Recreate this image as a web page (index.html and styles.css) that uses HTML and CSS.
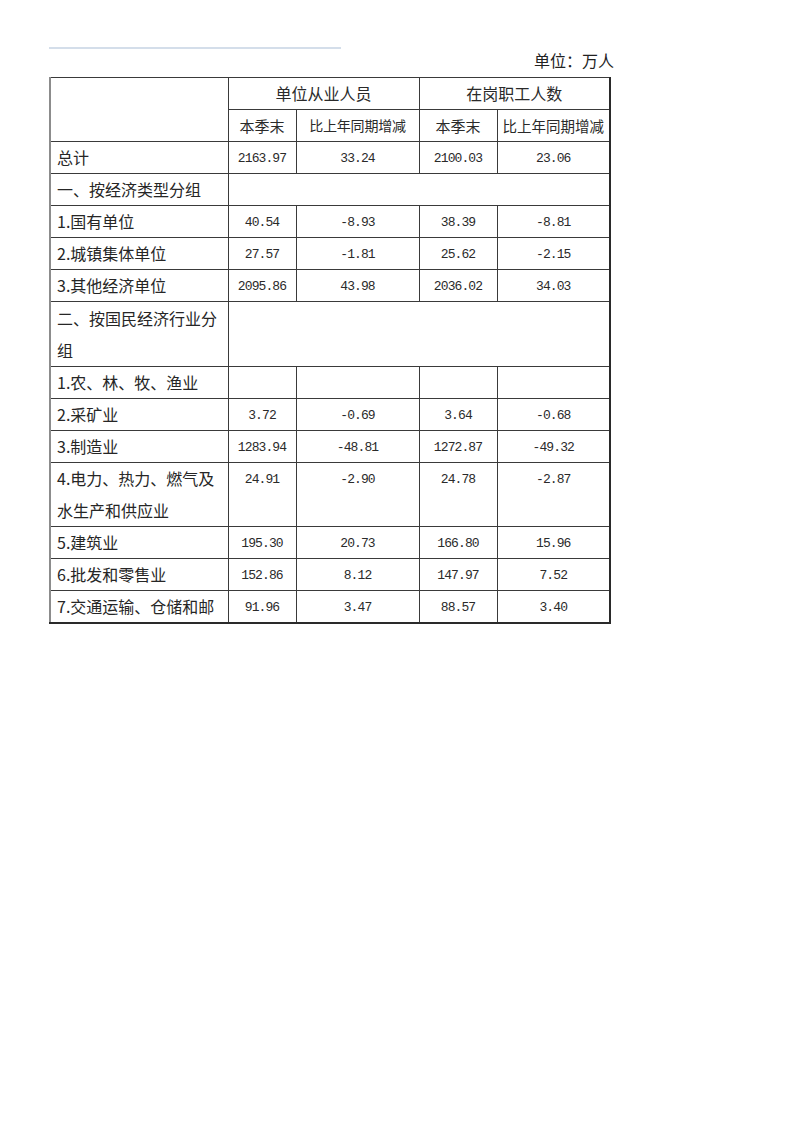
FILE: index.html
```html
<!DOCTYPE html>
<html lang="zh">
<head>
<meta charset="utf-8">
<title>单位从业人员</title>
<link rel="stylesheet" href="styles.css">
</head>
<body>
<div class="page">
  <div class="rule"></div>
  <div class="unit">单位：万人</div>
  <table class="data">
    <colgroup>
      <col class="c-label"><col class="c-a"><col class="c-b"><col class="c-c"><col class="c-d">
    </colgroup>
    <thead>
      <tr>
        <th rowspan="2" class="blank"></th>
        <th colspan="2" class="top">单位从业人员</th>
        <th colspan="2" class="top">在岗职工人数</th>
      </tr>
      <tr>
        <th class="sub">本季末</th>
        <th class="sub small">比上年同期增减</th>
        <th class="sub">本季末</th>
        <th class="sub small2">比上年同期增减</th>
      </tr>
    </thead>
    <tbody>
      <tr><td class="label">总计</td><td class="num">2163.97</td><td class="num">33.24</td><td class="num">2100.03</td><td class="num">23.06</td></tr>
      <tr><td class="label">一、按经济类型分组</td><td colspan="4"></td></tr>
      <tr><td class="label">1.国有单位</td><td class="num">40.54</td><td class="num">-8.93</td><td class="num">38.39</td><td class="num">-8.81</td></tr>
      <tr><td class="label">2.城镇集体单位</td><td class="num">27.57</td><td class="num">-1.81</td><td class="num">25.62</td><td class="num">-2.15</td></tr>
      <tr><td class="label">3.其他经济单位</td><td class="num">2095.86</td><td class="num">43.98</td><td class="num">2036.02</td><td class="num">34.03</td></tr>
      <tr class="two"><td class="label">二、按国民经济行业分组</td><td colspan="4"></td></tr>
      <tr><td class="label">1.农、林、牧、渔业</td><td></td><td></td><td></td><td></td></tr>
      <tr><td class="label">2.采矿业</td><td class="num">3.72</td><td class="num">-0.69</td><td class="num">3.64</td><td class="num">-0.68</td></tr>
      <tr><td class="label">3.制造业</td><td class="num">1283.94</td><td class="num">-48.81</td><td class="num">1272.87</td><td class="num">-49.32</td></tr>
      <tr class="two b"><td class="label">4.电力、热力、燃气及水生产和供应业</td><td class="num">24.91</td><td class="num">-2.90</td><td class="num">24.78</td><td class="num">-2.87</td></tr>
      <tr><td class="label">5.建筑业</td><td class="num">195.30</td><td class="num">20.73</td><td class="num">166.80</td><td class="num">15.96</td></tr>
      <tr><td class="label">6.批发和零售业</td><td class="num">152.86</td><td class="num">8.12</td><td class="num">147.97</td><td class="num">7.52</td></tr>
      <tr><td class="label">7.交通运输、仓储和邮</td><td class="num">91.96</td><td class="num">3.47</td><td class="num">88.57</td><td class="num">3.40</td></tr>
    </tbody>
  </table>
</div>
</body>
</html>
```

FILE: styles.css
```css
html, body {
  margin: 0;
  padding: 0;
  background: #ffffff;
}

body {
  font-family: "Noto Sans CJK SC", "Noto Sans", sans-serif;
  color: #2a2a2a;
}

.page {
  padding: 47px 0 0 49px;
  width: 563px;
}

.rule {
  width: 292px;
  height: 2px;
  background: #d4deea;
}

.unit {
  height: 28px;
  font-size: 16px;
  line-height: 22px;
  text-align: right;
  margin-right: -2px;
  color: #222;
}

.data {
  border-collapse: collapse;
  table-layout: fixed;
  width: 560px;
  border-top: 1px solid #1e1e1e;
  border-left: 2px solid #8c8c8c;
  border-right: 2px solid #2a2a2a;
  border-bottom: 2px solid #2a2a2a;
}

.c-label { width: 178px; }
.c-a { width: 68px; }
.c-b { width: 123px; }
.c-c { width: 78px; }
.c-d { width: 113px; }

.data th,
.data td {
  border: 1px solid #3a3a3a;
  padding: 0;
  line-height: 31px;
  vertical-align: top;
  font-weight: normal;
}

.data th {
  text-align: center;
  color: #2a2a2a;
}

.data th.top {
  font-size: 16px;
}

.data th.sub {
  font-size: 15px;
}

.data th.small {
  font-size: 14px;
  letter-spacing: -0.2px;
}

.data th.small2 {
  font-size: 14.5px;
}

.data td.label {
  font-size: 16px;
  padding-left: 6px;
  color: #262626;
}

.data tr.two td {
  line-height: 32px;
}

.data tr.two.b td {
  line-height: 31.5px;
}

.data td.num {
  text-align: center;
  font-family: "Liberation Mono", "DejaVu Sans Mono", monospace;
  font-size: 13px;
  letter-spacing: -0.9px;
  padding-top: 2px;
  line-height: 29px;
  color: #2a2a2a;
}

.data tr.two.b td.num {
  line-height: 29.5px;
}
```
